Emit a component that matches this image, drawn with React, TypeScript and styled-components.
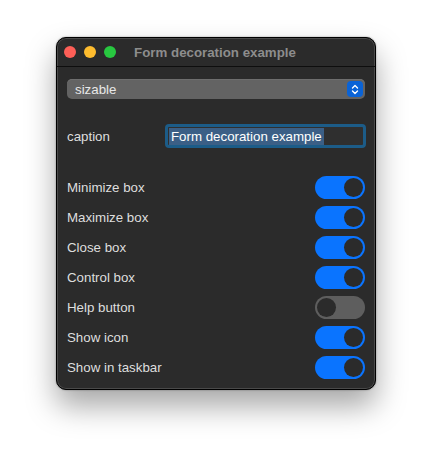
import React, { useState } from 'react';
import styled, { createGlobalStyle } from 'styled-components';

const GlobalStyle = createGlobalStyle`
  html, body {
    margin: 0;
    padding: 0;
    background: #ffffff;
  }
  body {
    font-family: "Liberation Sans", Arial, sans-serif;
    -webkit-font-smoothing: antialiased;
  }
`;

const Page = styled.div`
  width: 432px;
  height: 465px;
  display: flex;
  justify-content: center;
  padding-top: 37px;
  box-sizing: border-box;
`;

const Window = styled.div`
  width: 320px;
  height: 353px;
  box-sizing: border-box;
  background: #2b2b2b;
  border: 1px solid #000;
  border-radius: 10px;
  box-shadow: inset 0 0 0 1px #4a4a4a, 0 16px 30px rgba(0, 0, 0, 0.35),
    0 0 2px rgba(0, 0, 0, 0.4);
  display: flex;
  flex-direction: column;
  overflow: hidden;
`;

const TitleBar = styled.div`
  height: 28px;
  flex: none;
  display: flex;
  align-items: center;
  padding: 0 8px 0 7px;
  border-bottom: 1px solid #0e0e0e;
`;

const Lights = styled.div`
  display: flex;
  gap: 8px;
`;

const Light = styled.span<{ $color: string }>`
  width: 12px;
  height: 12px;
  border-radius: 50%;
  background: ${(p) => p.$color};
`;

const Title = styled.div`
  flex: 1;
  text-align: center;
  font-size: 13.3px;
  font-weight: 700;
  color: #8d8d8d;
  padding-right: 53px;
`;

const Content = styled.div`
  padding: 12px 10px 0 10px;
  display: flex;
  flex-direction: column;
`;

const Popup = styled.div`
  height: 20px;
  border-radius: 5px;
  background: #636363;
  box-shadow: inset 0 1px 0 #6e6e6e;
  display: flex;
  align-items: center;
  justify-content: space-between;
  padding: 0 2px 0 8px;
  font-size: 13.3px;
  color: #e8e8e8;
`;

const Stepper = styled.span`
  width: 16px;
  height: 16px;
  border-radius: 4px;
  background: #0a63d6;
  display: flex;
  align-items: center;
  justify-content: center;
`;

const CaptionRow = styled.div`
  display: flex;
  align-items: center;
  margin-top: 25px;
  height: 24px;
`;

const Label = styled.span`
  font-size: 13.3px;
  color: #dedede;
`;

const CaptionLabel = styled(Label)`
  width: 98px;
  flex: none;
`;

const Field = styled.div`
  flex: 1;
  height: 24px;
  box-sizing: border-box;
  border: 3px solid #1c5c88;
  border-radius: 4px;
  background: #2f2f2f;
  display: flex;
  align-items: center;
  padding: 0 1px;
  margin-right: -1px;
`;

const Selected = styled.span`
  background: #3b5f86;
  color: #ffffff;
  font-size: 13.3px;
  line-height: 17px;
  padding: 0 2px;
`;

const Toggles = styled.div`
  margin-top: 24px;
  display: flex;
  flex-direction: column;
`;

const Row = styled.div`
  height: 30px;
  display: flex;
  align-items: center;
  justify-content: space-between;
`;

const Track = styled.button<{ $on: boolean }>`
  width: 50px;
  height: 23px;
  padding: 0;
  border: none;
  border-radius: 12px;
  background: ${(p) => (p.$on ? '#0a74ff' : '#5e5e5e')};
  display: flex;
  align-items: center;
  justify-content: ${(p) => (p.$on ? 'flex-end' : 'flex-start')};
  cursor: pointer;
`;

const Knob = styled.span`
  width: 19px;
  height: 19px;
  margin: 0 2px;
  border-radius: 50%;
  background: #2b2b2b;
`;

const items: [string, boolean][] = [
  ['Minimize box', true],
  ['Maximize box', true],
  ['Close box', true],
  ['Control box', true],
  ['Help button', false],
  ['Show icon', true],
  ['Show in taskbar', true],
];

export default function App() {
  const [states, setStates] = useState(items.map((i) => i[1]));
  return (
    <Page>
      <GlobalStyle />
      <Window>
        <TitleBar>
          <Lights>
            <Light $color="#fe5f57" />
            <Light $color="#febc2e" />
            <Light $color="#28c840" />
          </Lights>
          <Title>Form decoration example</Title>
        </TitleBar>
        <Content>
          <Popup>
            sizable
            <Stepper>
              <svg width="8" height="11" viewBox="0 0 8 11" fill="none">
                <path
                  d="M1.5 4 L4 1.5 L6.5 4 M1.5 7 L4 9.5 L6.5 7"
                  stroke="#fff"
                  strokeWidth="1.4"
                  strokeLinecap="round"
                  strokeLinejoin="round"
                />
              </svg>
            </Stepper>
          </Popup>
          <CaptionRow>
            <CaptionLabel>caption</CaptionLabel>
            <Field>
              <Selected>Form decoration example</Selected>
            </Field>
          </CaptionRow>
          <Toggles>
            {items.map(([label], i) => (
              <Row key={label}>
                <Label>{label}</Label>
                <Track
                  $on={states[i]}
                  onClick={() =>
                    setStates((s) => s.map((v, j) => (j === i ? !v : v)))
                  }
                >
                  <Knob />
                </Track>
              </Row>
            ))}
          </Toggles>
        </Content>
      </Window>
    </Page>
  );
}
